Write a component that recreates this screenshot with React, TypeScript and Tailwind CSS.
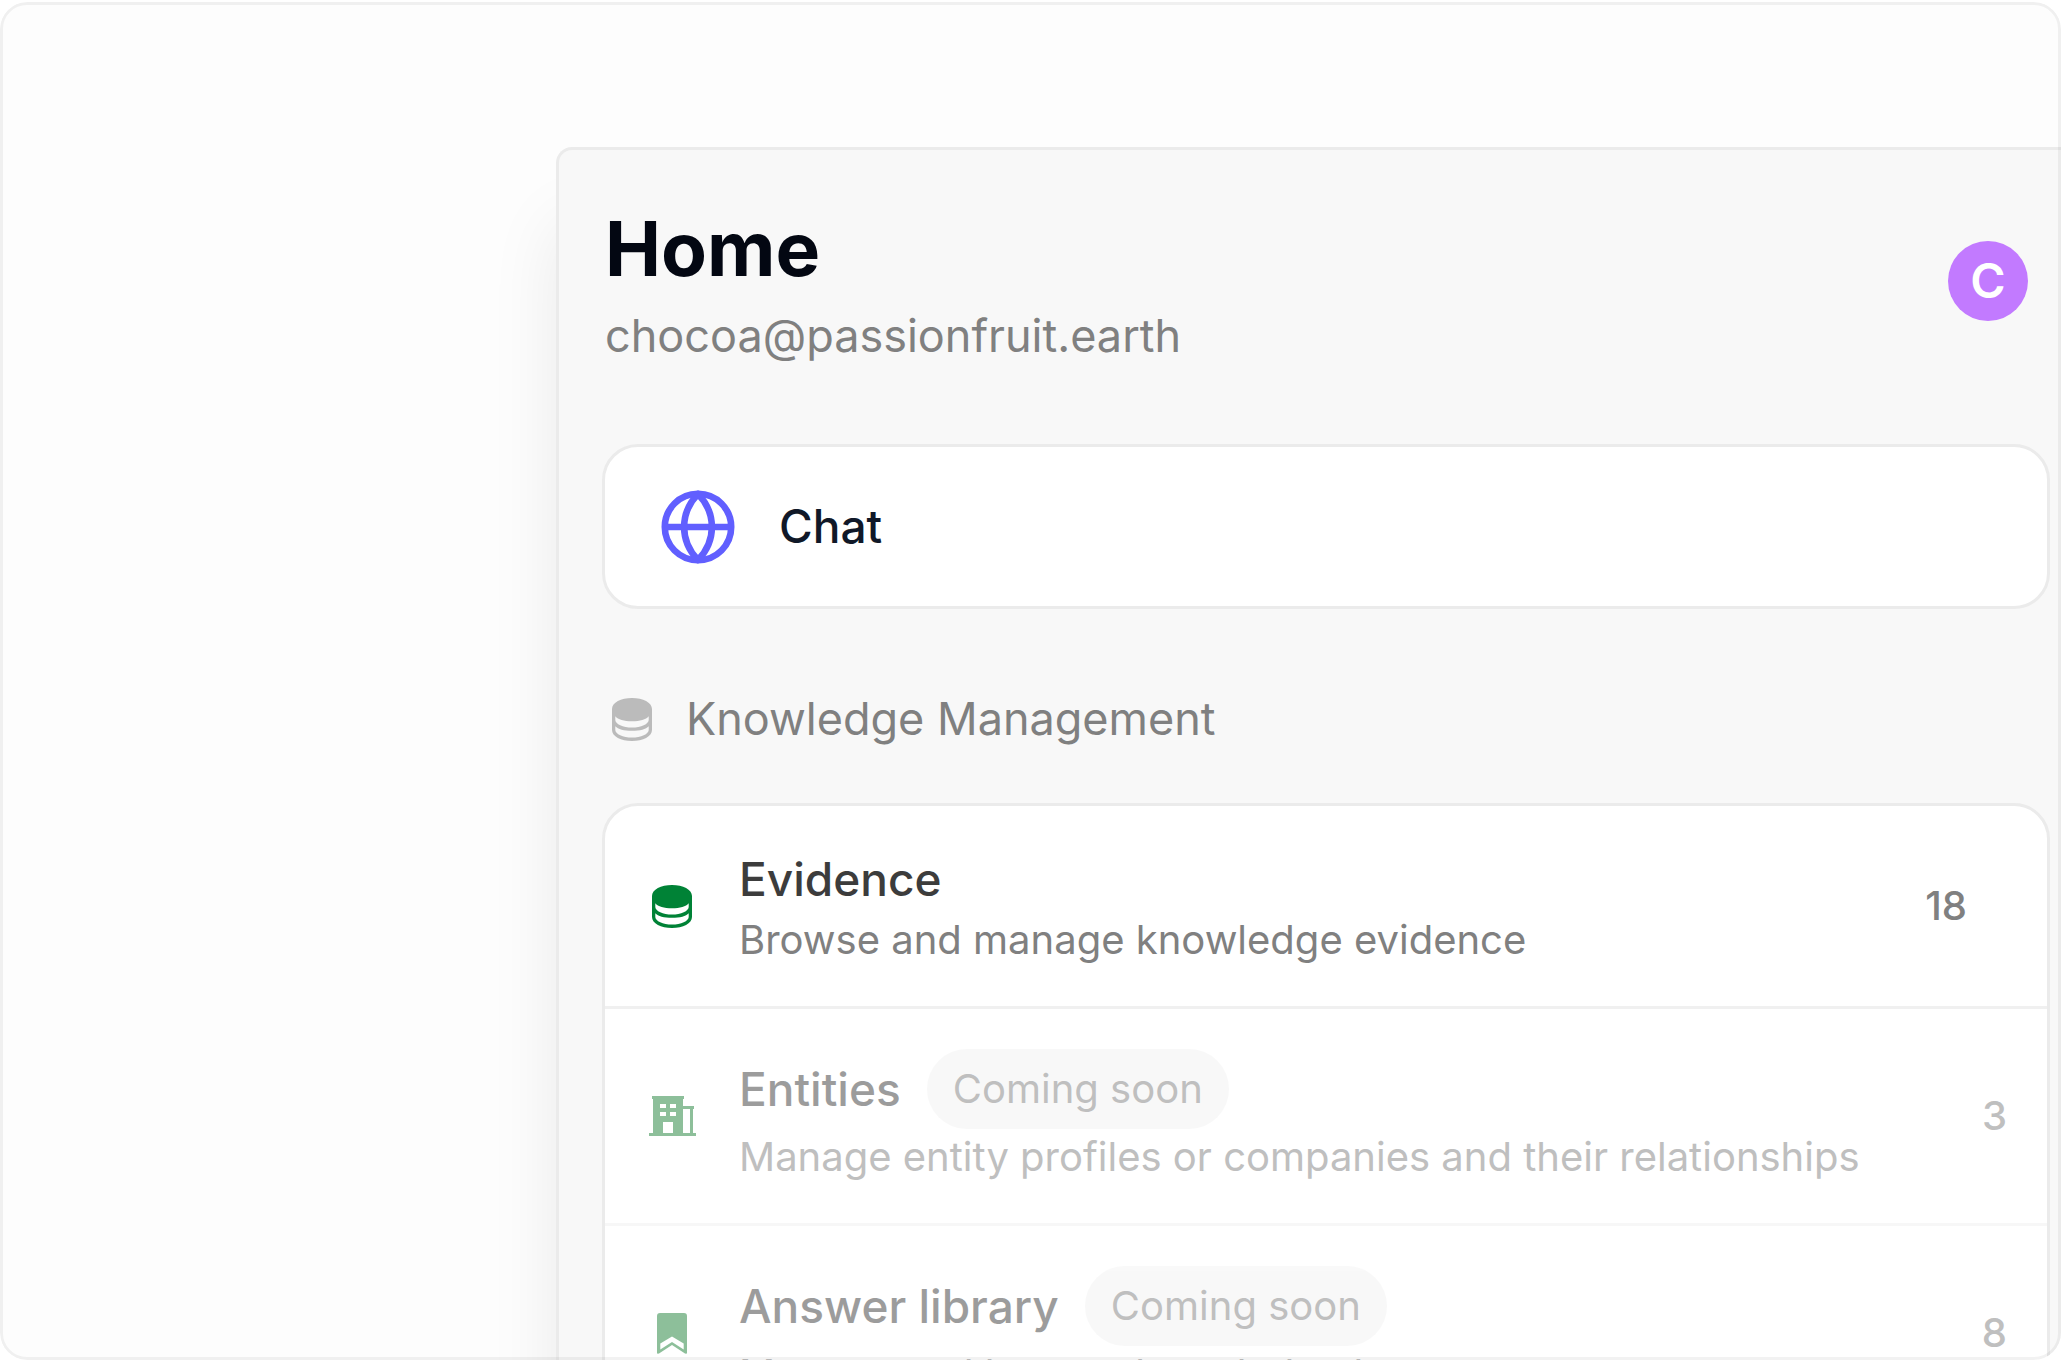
import React from "react";

type RowProps = {
  icon: React.ReactNode;
  title: string;
  description: string;
  count: number;
  soon?: boolean;
};

function GlobeIcon() {
  return (
    <svg viewBox="0 0 74 74" className="size-[74px]" fill="none" stroke="#615fff" strokeWidth="6.6" strokeLinejoin="round" aria-hidden="true">
      <circle cx="37" cy="37" r="33.2" />
      <path d="M3.5 37h67" />
      <path d="M37 4C18.500 23 18.500 51 37 70C55.500 51 55.500 23 37 4Z" />
    </svg>
  );
}

function DatabaseIcon() {
  return (
    <svg viewBox="0 0 40 43" className="h-[43px] w-10" fill="currentColor" aria-hidden="true">
      <path
        fillRule="evenodd"
        d="M20 0C31 0 40 4.500 40 11V32C40 38.500 31 43 20 43S0 38.500 0 32V11C0 4.500 9 0 20 0ZM3.300 18.300C6 21.500 12 23.300 20 23.300S34 21.500 36.700 18.300V22C36.700 26 29 29.600 20 29.600S3.300 26 3.300 22ZM3.300 28.200C6 31.200 12 32.800 20 32.800S34 31.200 36.700 28.200V32C36.700 36 29 39.600 20 39.600S3.300 36 3.300 32Z"
      />
    </svg>
  );
}

function BuildingIcon() {
  return (
    <svg viewBox="-1 0 48 40" className="h-10 w-12" fill="currentColor" aria-hidden="true">
      <path
        fillRule="evenodd"
        d="M3 0H35V3H34V10H45V13H44V37H47V40H0V37H4V3H3ZM11 8V12H17V8ZM21 8V12H27V8ZM11 16V20H17V16ZM21 16V20H27V16ZM14 26V37H24V26ZM34 13V37H41V13Z"
      />
    </svg>
  );
}

function BookmarkIcon() {
  return (
    <svg viewBox="0 0 30 41" className="h-[41px] w-[30px]" fill="currentColor" aria-hidden="true">
      <path fillRule="evenodd" d="M3 0H27Q30 0 30 3V40Q30 41 28 40.500L15 32L2 40.500Q0 41 0 40V3Q0 0 3 0ZM3.300 30.500V36.500L15 29L26.700 36.500V30.500L15 23.500Z" />
    </svg>
  );
}

function Row({ icon, title, description, count, soon }: RowProps) {
  return (
    <a href="#" className={soon ? "flex items-center opacity-50" : "flex items-center"}>
      <span className={soon ? "flex w-[134px] shrink-0 justify-center text-[#1d8137]" : "flex w-[134px] shrink-0 justify-center text-[#008236]"}>
        {icon}
      </span>
      <span className="flex min-w-0 flex-1 flex-col pt-10 pb-[38px]">
        <span className="flex items-center gap-[26px]">
          <span className="text-[46px] leading-[66px] font-medium text-[#3c3c3c]">{title}</span>
          {soon && (
            <span className="rounded-full bg-[#f3f3f3] px-[26px] text-[40px] leading-[80px] text-[#808080]">Coming soon</span>
          )}
        </span>
        <span className="text-[40px] leading-[56px] whitespace-nowrap text-[#808080]">{description}</span>
      </span>
      <span className={soon ? "pr-10 text-[40px] font-medium text-[#808080]" : "pr-20 text-[40px] font-medium text-[#808080]"}>
        {count}
      </span>
    </a>
  );
}

export default function App() {
  return (
    <div className="h-screen overflow-hidden bg-white pt-[2px] font-[Inter,sans-serif]">
      <div className="relative h-full overflow-hidden rounded-[27px] bg-[#fdfdfd] pt-[145px] pl-[556px]">
        <main className="rounded-tl-[16px] border-t-3 border-l-3 border-[#ebebeb] bg-[#f8f8f8] pt-11 pr-[11px] pb-20 pl-[43px] shadow-[0_76px_70px_rgba(0,0,0,0.08)]">
          <header className="flex items-center justify-between pr-[22px] pl-[3px]">
            <div>
              <h1 className="text-[75px] leading-[110px] font-bold text-[#030712]">Home</h1>
              <p className="text-[45px] leading-[64px] text-[#808080]">chocoa@passionfruit.earth</p>
            </div>
            <button className="size-20 rounded-full bg-[#c27aff] text-[48px] font-semibold text-white">C</button>
          </header>

          <a href="#" className="mt-[76px] flex h-[165px] items-center gap-11 rounded-[36px] border-3 border-[#ebebeb] bg-white px-14">
            <GlobeIcon />
            <span className="text-[46px] font-medium text-[#101828]">Chat</span>
          </a>

          <h2 className="mt-[77px] flex items-center gap-[34px] pl-[10px] text-[45px] leading-[66px] text-[#808080]">
            <span className="text-[#bbbbbb]">
              <DatabaseIcon />
            </span>
            Knowledge Management
          </h2>

          <section className="mt-[51px] divide-y-3 divide-[#f0f0f0] rounded-[36px] border-3 border-[#ebebeb] bg-white">
            <Row icon={<DatabaseIcon />} title="Evidence" description="Browse and manage knowledge evidence" count={18} />
            <Row icon={<BuildingIcon />} title="Entities" description="Manage entity profiles or companies and their relationships" count={3} soon />
            <Row icon={<BookmarkIcon />} title="Answer library" description="Manage and browse knowledge base" count={8} soon />
          </section>
        </main>
        <div className="pointer-events-none absolute inset-0 rounded-[27px] border-3 border-black/5" />
      </div>
    </div>
  );
}
